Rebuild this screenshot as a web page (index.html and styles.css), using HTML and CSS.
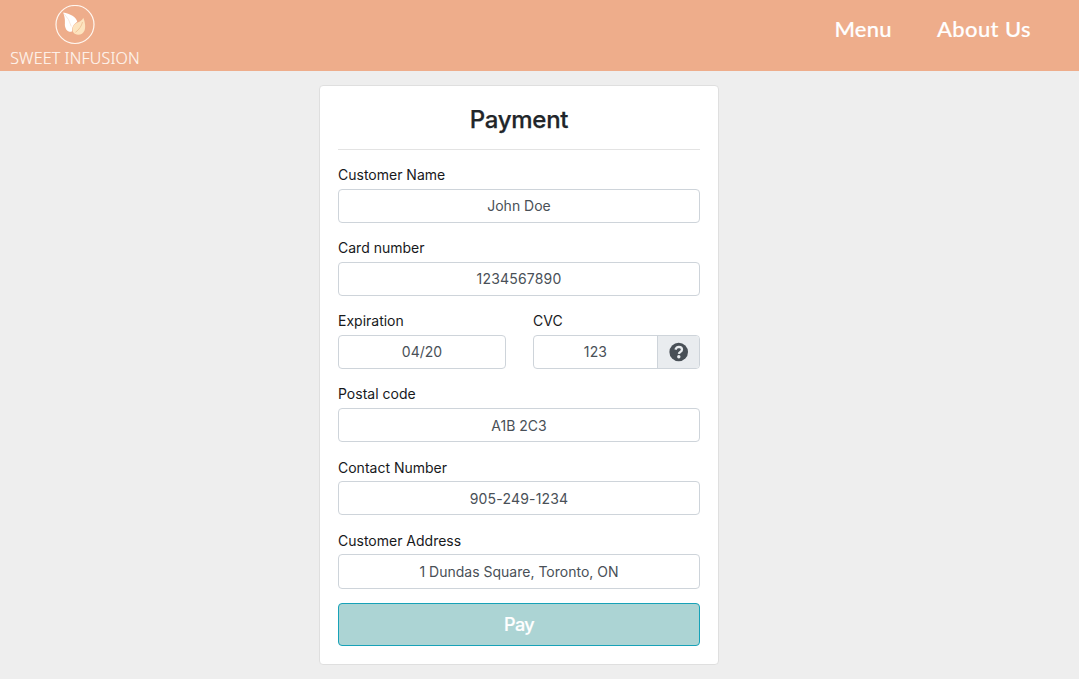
FILE: index.html
```html
<!DOCTYPE html>
<html lang="en">
<head>
<meta charset="utf-8">
<title>Sweet Infusion - Payment</title>
<link rel="stylesheet" href="styles.css">
</head>
<body>
<header class="navbar">
  <a class="brand">
    <svg class="brand-mark" viewBox="0 0 40 40" width="40" height="40">
      <circle cx="20" cy="19.5" r="19" fill="none" stroke="#fff6ef" stroke-width="1.2"/>
      <path d="M8.2 7.5C15 8.5 21.5 12.2 22.2 16.7C18.8 19 16.6 22.5 17.1 26.6C12.5 27.4 9.4 23.7 9.9 17.9C10.2 14.1 9.3 10.6 8.2 7.5Z" fill="#fff"/>
      <path d="M9.2 8.8Q14.3 14 16.3 21.5" fill="none" stroke="#f8dfd1" stroke-width=".7"/>
      <path d="M28.2 12.7C30 16.5 30.9 21.9 29.5 25.6C28 29.7 23.5 30.7 20.2 29.1C17 27.1 16.7 23 19.1 19.9C21.3 17.2 26.8 16.9 28.2 12.7Z" fill="#fde4bf"/>
      <path d="M27.5 17Q26 23.3 20.4 27.3" fill="none" stroke="#eebc91" stroke-width=".8"/>
    </svg>
    <span class="brand-name">SWEET INFUSION</span>
  </a>
  <nav class="links"><a class="link-menu">Menu</a><a class="link-about">About Us</a></nav>
</header>
<main class="card">
  <h1 class="title">Payment</h1>
  <form class="form">
    <div class="field"><label>Customer Name</label><div class="control">John Doe</div></div>
    <div class="field"><label>Card number</label><div class="control digits">1234567890</div></div>
    <div class="pair">
      <div class="field"><label>Expiration</label><div class="control">04/20</div></div>
      <div class="field"><label>CVC</label>
        <div class="control group"><span class="cvc digits">123</span><span class="addon">
          <svg viewBox="0 0 20 20" width="20" height="20"><circle cx="9.7" cy="10" r="9.3" fill="#495057"/><path d="M6.4 7.6Q7.5 4.9 9.9 4.9Q13 5 13 7.6Q13 9 11.3 9.9Q10 10.6 9.9 11.9" fill="none" stroke="#e9ecef" stroke-width="2.3"/><circle cx="9.8" cy="14.7" r="1.7" fill="#e9ecef"/></svg>
        </span></div>
      </div>
    </div>
    <div class="field"><label>Postal code</label><div class="control low">A1B 2C3</div></div>
    <div class="field"><label class="label-low">Contact Number</label><div class="control low digits">905-249-1234</div></div>
    <div class="field"><label class="label-low">Customer Address</label><div class="control low tall">1 Dundas Square, Toronto, ON</div></div>
    <button class="pay" type="button">Pay</button>
  </form>
</main>
</body>
</html>
```
FILE: styles.css
```css
* { box-sizing: border-box; }
body { margin: 0; min-height: 679px; background: #eeeeee; font-family: Inter, "Liberation Sans", sans-serif; color: #212529; }
.navbar { height: 71px; background: #eead8b; display: flex; justify-content: space-between; align-items: flex-start; }
.brand { width: 150px; padding-top: 5px; display: flex; flex-direction: column; align-items: center; }
.brand-mark { display: block; }
.brand-name { font: 300 16px/20px "Noto Sans", "Open Sans", sans-serif; letter-spacing: .15px; color: #fff6f0; margin-top: 3px; white-space: nowrap; -webkit-text-stroke: .15px #fff6f0; }
.links { display: flex; gap: 45px; padding: 14px 48px 0 0; font: 500 22px/30px Lato, sans-serif; color: #fff; white-space: nowrap; -webkit-text-stroke: .2px #fff; }
.link-menu { letter-spacing: .25px; }
.link-about { letter-spacing: .4px; }
.card { width: 400px; height: 580px; margin: 14px 0 0 319px; padding: 17px 18px 0; background: #fff; border: 1px solid #dfdfdf; border-radius: 4px; }
.title { margin: 0; height: 47px; border-bottom: 1px solid #e3e3e3; font-size: 24px; line-height: 34px; font-weight: 500; letter-spacing: -.3px; text-align: center; -webkit-text-stroke: .25px #212529; }
.form { padding-top: 15px; }
.field { height: 73px; }
label { display: block; height: 24px; font-size: 14px; line-height: 19px; color: #17191c; }
.label-low { line-height: 21px; }
.control { height: 34px; border: 1px solid #ced4da; border-radius: 4px; font-size: 14px; line-height: 32px; text-align: center; color: #495057; }
.low { line-height: 33px; }
.tall { height: 35px; }
.digits { letter-spacing: .18px; }
.pair { display: grid; grid-template-columns: 168px 167px; justify-content: space-between; }
.group { display: flex; }
.cvc { flex: 1; }
.addon { width: 42px; border-left: 1px solid #ced4da; background: #e9ecef; border-radius: 0 3px 3px 0; display: flex; align-items: center; justify-content: center; }
.pay { display: block; width: 100%; height: 43px; margin: 0; padding: 0; border: 1px solid #17a2b8; border-radius: 4px; background: #acd4d4; color: #fff; font: 500 18px/41px Inter, sans-serif; letter-spacing: -.6px; -webkit-text-stroke: .2px #fff; }
```
